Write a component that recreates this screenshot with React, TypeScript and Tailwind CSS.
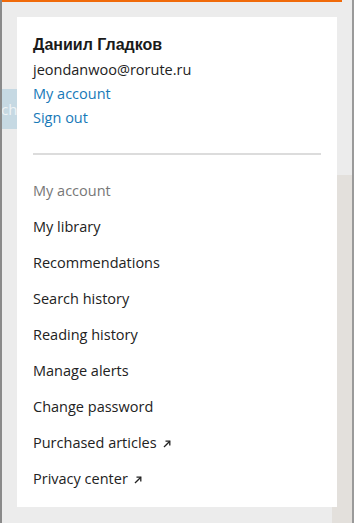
import React from "react";

const Arrow = () => (
  <svg width="8" height="8" viewBox="0 0 8 8" className="inline-block ml-[6px] mt-[2px]" fill="none" stroke="#222" strokeWidth="1.3">
    <path d="M1 7 L6.8 1.2" />
    <path d="M2.5 1.2 H6.8 V5.5" />
  </svg>
);

const items: { label: string; ext?: boolean; muted?: boolean }[] = [
  { label: "My account", muted: true },
  { label: "My library" },
  { label: "Recommendations" },
  { label: "Search history" },
  { label: "Reading history" },
  { label: "Manage alerts" },
  { label: "Change password" },
  { label: "Purchased articles", ext: true },
  { label: "Privacy center", ext: true },
];

export default function App() {
  return (
    <div className="relative w-[354px] h-[523px] overflow-hidden bg-[#ececec] border-l-[2px] border-l-[#8a8a8a] border-r-[2px] border-r-[#9a9a9a]" style={{ fontFamily: "'Open Sans', sans-serif" }}>
      <div className="h-[2px] w-[340px] bg-[#f06a0a]" />
      <div className="flex h-[521px]">
        <div className="flex flex-col w-[330px]">
          <div className="mt-[87px] w-[15px] h-[40px] bg-[#c6d9e3] overflow-hidden flex items-center">
            <span className="text-[#eef3f6] text-[15px] leading-none -ml-[1px]">ch</span>
          </div>
        </div>
        <div className="flex flex-col w-[20px]">
          <div className="mt-[173px] flex-1 bg-[#e3e0dc]" />
        </div>
      </div>

      <div className="absolute left-[15px] top-[17px] w-[320px] h-[490px] bg-white px-[16px] pt-[18px]">
        <div className="text-[16px] font-bold text-[#1a1a1a] leading-[20px]" style={{ fontFamily: "'Liberation Sans', Arial, sans-serif" }}>
          Даниил Гладков
        </div>
        <div className="text-[14.5px] text-[#222] leading-[24px] mt-[3px]">jeondanwoo@rorute.ru</div>
        <div className="text-[14.5px] text-[#1779b8] leading-[24px]">My account</div>
        <div className="text-[14.5px] text-[#1779b8] leading-[24px]">Sign out</div>
        <div className="mt-[23px] h-[2px] w-[288px] bg-[#dcdcdc]" />
        <ul className="mt-[18px]">
          {items.map((it) => (
            <li key={it.label} className={`h-[36px] flex items-center text-[14.5px] ${it.muted ? "text-[#777]" : "text-[#222]"}`}>
              <span>{it.label}</span>
              {it.ext && <Arrow />}
            </li>
          ))}
        </ul>
      </div>
    </div>
  );
}
